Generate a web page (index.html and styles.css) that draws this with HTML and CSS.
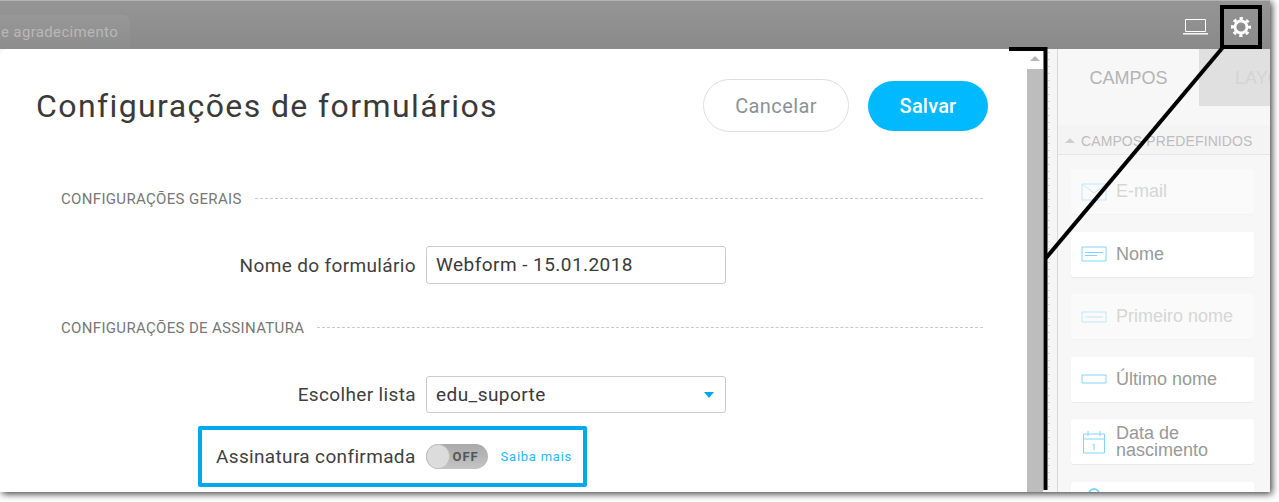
FILE: index.html
```
<!DOCTYPE html>
<html lang="pt">
<head>
<meta charset="utf-8">
<title>Configurações de formulários</title>
<link rel="stylesheet" href="styles.css">
</head>
<body>
<div class="shot">
  <header class="topbar">
    <div class="tab">e agradecimento</div>
    <div class="tools">
      <svg class="laptop" width="25" height="16" viewBox="0 0 25 16"><path d="M2.500 .5h20v12h-20z" fill="none" stroke="#fff"/><path d="M0 14.800h25" stroke="#fff" stroke-width="1.400"/></svg>
      <svg class="gear" width="20" height="20" viewBox="0 0 20 20"><circle cx="10" cy="10" r="6" fill="none" stroke="#fff" stroke-width="2.800"/><circle cx="10" cy="10" r="8.500" fill="none" stroke="#fff" stroke-width="3" stroke-dasharray="3.300 3.376" stroke-dashoffset="1.650"/></svg>
    </div>
  </header>
  <main class="main">
    <section class="modal">
      <div class="modal-head">
        <h1 class="title">Configurações de formulários</h1>
        <div class="actions">
          <button class="btn btn-cancel">Cancelar</button>
          <button class="btn btn-save">Salvar</button>
        </div>
      </div>
      <div class="modal-body">
        <div class="section-head first"><span>Configurações gerais</span><i></i></div>
        <div class="field field-name">
          <label class="field-label">Nome do formulário</label>
          <div class="input">Webform - 15.01.2018</div>
        </div>
        <div class="section-head second"><span>Configurações de assinatura</span><i></i></div>
        <div class="field field-list">
          <label class="field-label">Escolher lista</label>
          <div class="input select">edu_suporte<b class="caret"></b></div>
        </div>
        <div class="confirm">
          <span class="confirm-label">Assinatura confirmada</span>
          <span class="toggle"><span class="knob"></span><span class="off">OFF</span></span>
          <a class="more">Saiba mais</a>
        </div>
      </div>
    </section>
    <div class="scrollbar"><div class="scroll-up"><b></b></div><div class="scroll-thumb"></div></div>
    <div class="splitter"></div>
    <aside class="panel">
      <div class="tabs"><div class="ptab active">CAMPOS</div><div class="ptab idle">LAYOUT</div></div>
      <div class="group"><b></b>CAMPOS PREDEFINIDOS</div>
      <div class="cards">
        <div class="card faded">
          <svg class="ico" width="26" height="18" viewBox="0 0 26 18"><path d="M1 1h24v16H1zM1 1l12 9 12-9" fill="none" stroke="#81d4fa"/></svg>
          <span>E-mail</span>
        </div>
        <div class="card">
          <svg class="ico" width="26" height="16" viewBox="0 0 26 16"><path d="M1 1h24v14H1z" fill="none" stroke="#81d4fa"/><path d="M4 6.500h18M4 9.500h12" stroke="#81d4fa"/></svg>
          <span>Nome</span>
        </div>
        <div class="card faded">
          <svg class="ico" width="26" height="12" viewBox="0 0 26 12"><path d="M1 1h24v10H1z" fill="none" stroke="#81d4fa"/><path d="M4 6h18" stroke="#81d4fa"/></svg>
          <span>Primeiro nome</span>
        </div>
        <div class="card">
          <svg class="ico" width="26" height="10" viewBox="0 0 26 10"><path d="M1 1h24v8H1z" fill="none" stroke="#81d4fa"/></svg>
          <span>Último nome</span>
        </div>
        <div class="card">
          <svg class="ico" width="26" height="24" viewBox="0 0 26 24"><path d="M2.500 4h21v19h-21zM2.500 9h21M7 1v5M19 1v5" fill="none" stroke="#81d4fa"/><path d="M11.500 15l1.500-1v6" fill="none" stroke="#81d4fa"/></svg>
          <span>Data de nascimento</span>
        </div>
        <div class="card">
          <svg class="ico ico-top" width="26" height="18" viewBox="0 0 26 18"><circle cx="13" cy="12" r="5" fill="none" stroke="#81d4fa" stroke-width="2"/></svg>
        </div>
      </div>
    </aside>
  </main>
  <svg class="marks" width="1270" height="492" viewBox="0 0 1270 492">
    <path d="M1009 49H1045.500V490" fill="none" stroke="#000" stroke-width="4"/>
    <path d="M1224 46L1046 258" fill="none" stroke="#000" stroke-width="4"/>
    <rect x="1222" y="7" width="38" height="40" fill="none" stroke="#000" stroke-width="4"/>
  </svg>
</div>
</body>
</html>
```

FILE: styles.css
```
* { box-sizing: border-box; }
html, body { margin: 0; padding: 0; background: #fff; }
body { width: 1279px; height: 502px; overflow: hidden; font-family: Roboto, "Liberation Sans", sans-serif; }

.shot {
  position: relative;
  width: 1270px;
  height: 492px;
  overflow: hidden;
  display: flex;
  flex-direction: column;
  box-shadow: 2px 2px 7px rgba(0, 0, 0, .75);
  background: #f7f7f7;
}

.topbar {
  height: 49px;
  flex: none;
  display: flex;
  justify-content: space-between;
  background: linear-gradient(#959595, #8a8a8a);
  border-top: 1px solid #b4b4b4;
}
.tab {
  width: 130px;
  height: 34px;
  margin-top: 14px;
  padding: 8px 0 0 1px;
  border-radius: 0 8px 0 0;
  background: linear-gradient(#979797, #8d8d8d);
  color: #b8b8b8;
  font-size: 15px;
  letter-spacing: .35px;
  line-height: 18px;
  white-space: nowrap;
}
.tools { display: flex; align-items: flex-start; padding-right: 19px; }
.laptop { margin-top: 18px; }
.gear { margin: 16px 0 0 23px; }

.main { flex: 1; display: flex; min-height: 0; }

.modal {
  width: 1027px;
  flex: none;
  background: #fff;
  border-radius: 8px 0 0 0;
  overflow: hidden;
}
.modal-head {
  display: flex;
  justify-content: space-between;
  align-items: center;
  padding: 30px 39px 0 36px;
}
.title {
  margin: 0;
  padding-top: 2px;
  font-size: 32px;
  font-weight: 400;
  line-height: 51px;
  letter-spacing: 1.4px;
  color: #3a3a3a;
}
.actions { display: flex; align-items: center; gap: 19px; }
.btn {
  display: block;
  padding: 0;
  font: 400 20px Roboto, sans-serif;
  letter-spacing: .4px;
  border-radius: 27px;
}
.btn-cancel {
  width: 146px;
  height: 53px;
  background: #fff;
  border: 1px solid #dedede;
  color: #8a9299;
}
.btn-save {
  width: 120px;
  height: 50px;
  background: #00b9ff;
  border: 0;
  color: #fff;
  font-weight: 500;
  letter-spacing: .2px;
}

.modal-body { padding: 0 44px 0 61px; }
.section-head {
  display: flex;
  align-items: center;
  gap: 13px;
  height: 20px;
  padding-top: 1px;
  color: #777;
  font-size: 15px;
  letter-spacing: .33px;
  text-transform: uppercase;
}
.section-head i { flex: 1; border-top: 1px dashed #c9c9c9; }
.section-head.first { margin-top: 56px; }
.section-head.second { margin-top: 33px; }

.field { display: flex; align-items: center; }
.field-name { margin-top: 38px; }
.field-list { margin-top: 39px; }
.field-label {
  width: 355px;
  margin-right: 10px;
  text-align: right;
  font-size: 19px;
  color: #3f3f3f;
  letter-spacing: .36px;
}
.input {
  position: relative;
  width: 300px;
  height: 38px;
  padding-left: 9px;
  border: 1px solid #ccc;
  border-radius: 3px;
  background: #fff;
  color: #3a3a3a;
  font-size: 19px;
  letter-spacing: .45px;
  line-height: 36px;
}
.select { height: 37px; line-height: 35px; }
.caret {
  position: absolute;
  right: 11px;
  top: 15px;
  border: 5px solid transparent;
  border-top: 6px solid #00a7e6;
  border-bottom: 0;
}

.confirm {
  display: inline-flex;
  align-items: center;
  width: 389px;
  height: 61px;
  margin: 13px 0 0 137px;
  padding: 0 0 0 14px;
  border: 4px solid #00a8ec;
  border-radius: 2px;
}
.confirm-label {
  font-size: 19px;
  color: #3f3f3f;
  letter-spacing: .35px;
  white-space: nowrap;
}
.toggle {
  display: flex;
  align-items: center;
  width: 62px;
  height: 25px;
  margin-left: 10px;
  border-radius: 13px;
  background: linear-gradient(#a9a9a9, #c4c4c4);
}
.knob {
  width: 24px;
  height: 25px;
  border-radius: 50%;
  background: #dcdcdc;
  border: 1px solid #c0c0c0;
}
.off {
  margin-left: 3px;
  font-size: 13px;
  font-weight: 700;
  color: #555;
  letter-spacing: .9px;
}
.more {
  margin-left: 13px;
  font-size: 13px;
  color: #29b6f6;
  letter-spacing: .75px;
  white-space: nowrap;
}

.scrollbar { width: 16px; flex: none; background: #bdbdbd; display: flex; flex-direction: column; }
.scroll-up { height: 20px; background: #fff; display: flex; justify-content: center; padding-top: 7px; }
.scroll-up b { border: 5px solid transparent; border-bottom: 5px solid #b5b5b5; border-top: 0; height: 0; }
.scroll-thumb { flex: 1; }

.splitter {
  width: 15px;
  flex: none;
  background: #f5f5f5 radial-gradient(circle, #d6d6d6 1px, transparent 1px) 4px 0 / 4px 7px repeat-y;
  border-right: 1px solid #d9d9d9;
}

.panel {
  flex: 1;
  min-width: 0;
  background: #f7f7f7;
  overflow: hidden;
  font-family: "Liberation Sans", Arial, sans-serif;
}
.tabs { display: flex; height: 57px; }
.ptab { font-size: 18px; line-height: 59px; overflow: hidden; white-space: nowrap; }
.ptab.active { width: 141px; text-align: center; color: #b4b4b4; }
.ptab.idle { flex: 1; background: #e0e0e0; color: #d4d4d4; padding-left: 36px; }
.group {
  display: flex;
  align-items: center;
  height: 30px;
  margin-top: 19px;
  padding: 2px 0 0 7px;
  background: #f4f4f4;
  border-bottom: 1px solid #e6e6e6;
  color: #bdbdbd;
  font-size: 14px;
  letter-spacing: .1px;
  white-space: nowrap;
}
.group b {
  margin-right: 6px;
  border: 5px solid transparent;
  border-bottom: 5px solid #cfcfcf;
  border-top: 0;
}
.cards { padding: 14px 16px 0 13px; display: flex; flex-direction: column; gap: 17.5px; }
.card {
  display: flex;
  align-items: center;
  flex: none;
  height: 45px;
  padding-left: 10px;
  border-radius: 3px;
  background: #fff;
  box-shadow: 0 1px 1px rgba(0, 0, 0, .06);
  color: #999;
  font-size: 18px;
  line-height: 17px;
}
.card span { margin-left: 9px; flex: 1; }
.ico { flex: none; }
.ico-top { align-self: flex-start; }
.card.faded { background: #fafafa; color: #d6d6d6; box-shadow: 0 1px 1px rgba(0, 0, 0, .02); }
.card.faded .ico { opacity: .45; }

.marks { position: absolute; left: 0; top: 0; pointer-events: none; }
```
